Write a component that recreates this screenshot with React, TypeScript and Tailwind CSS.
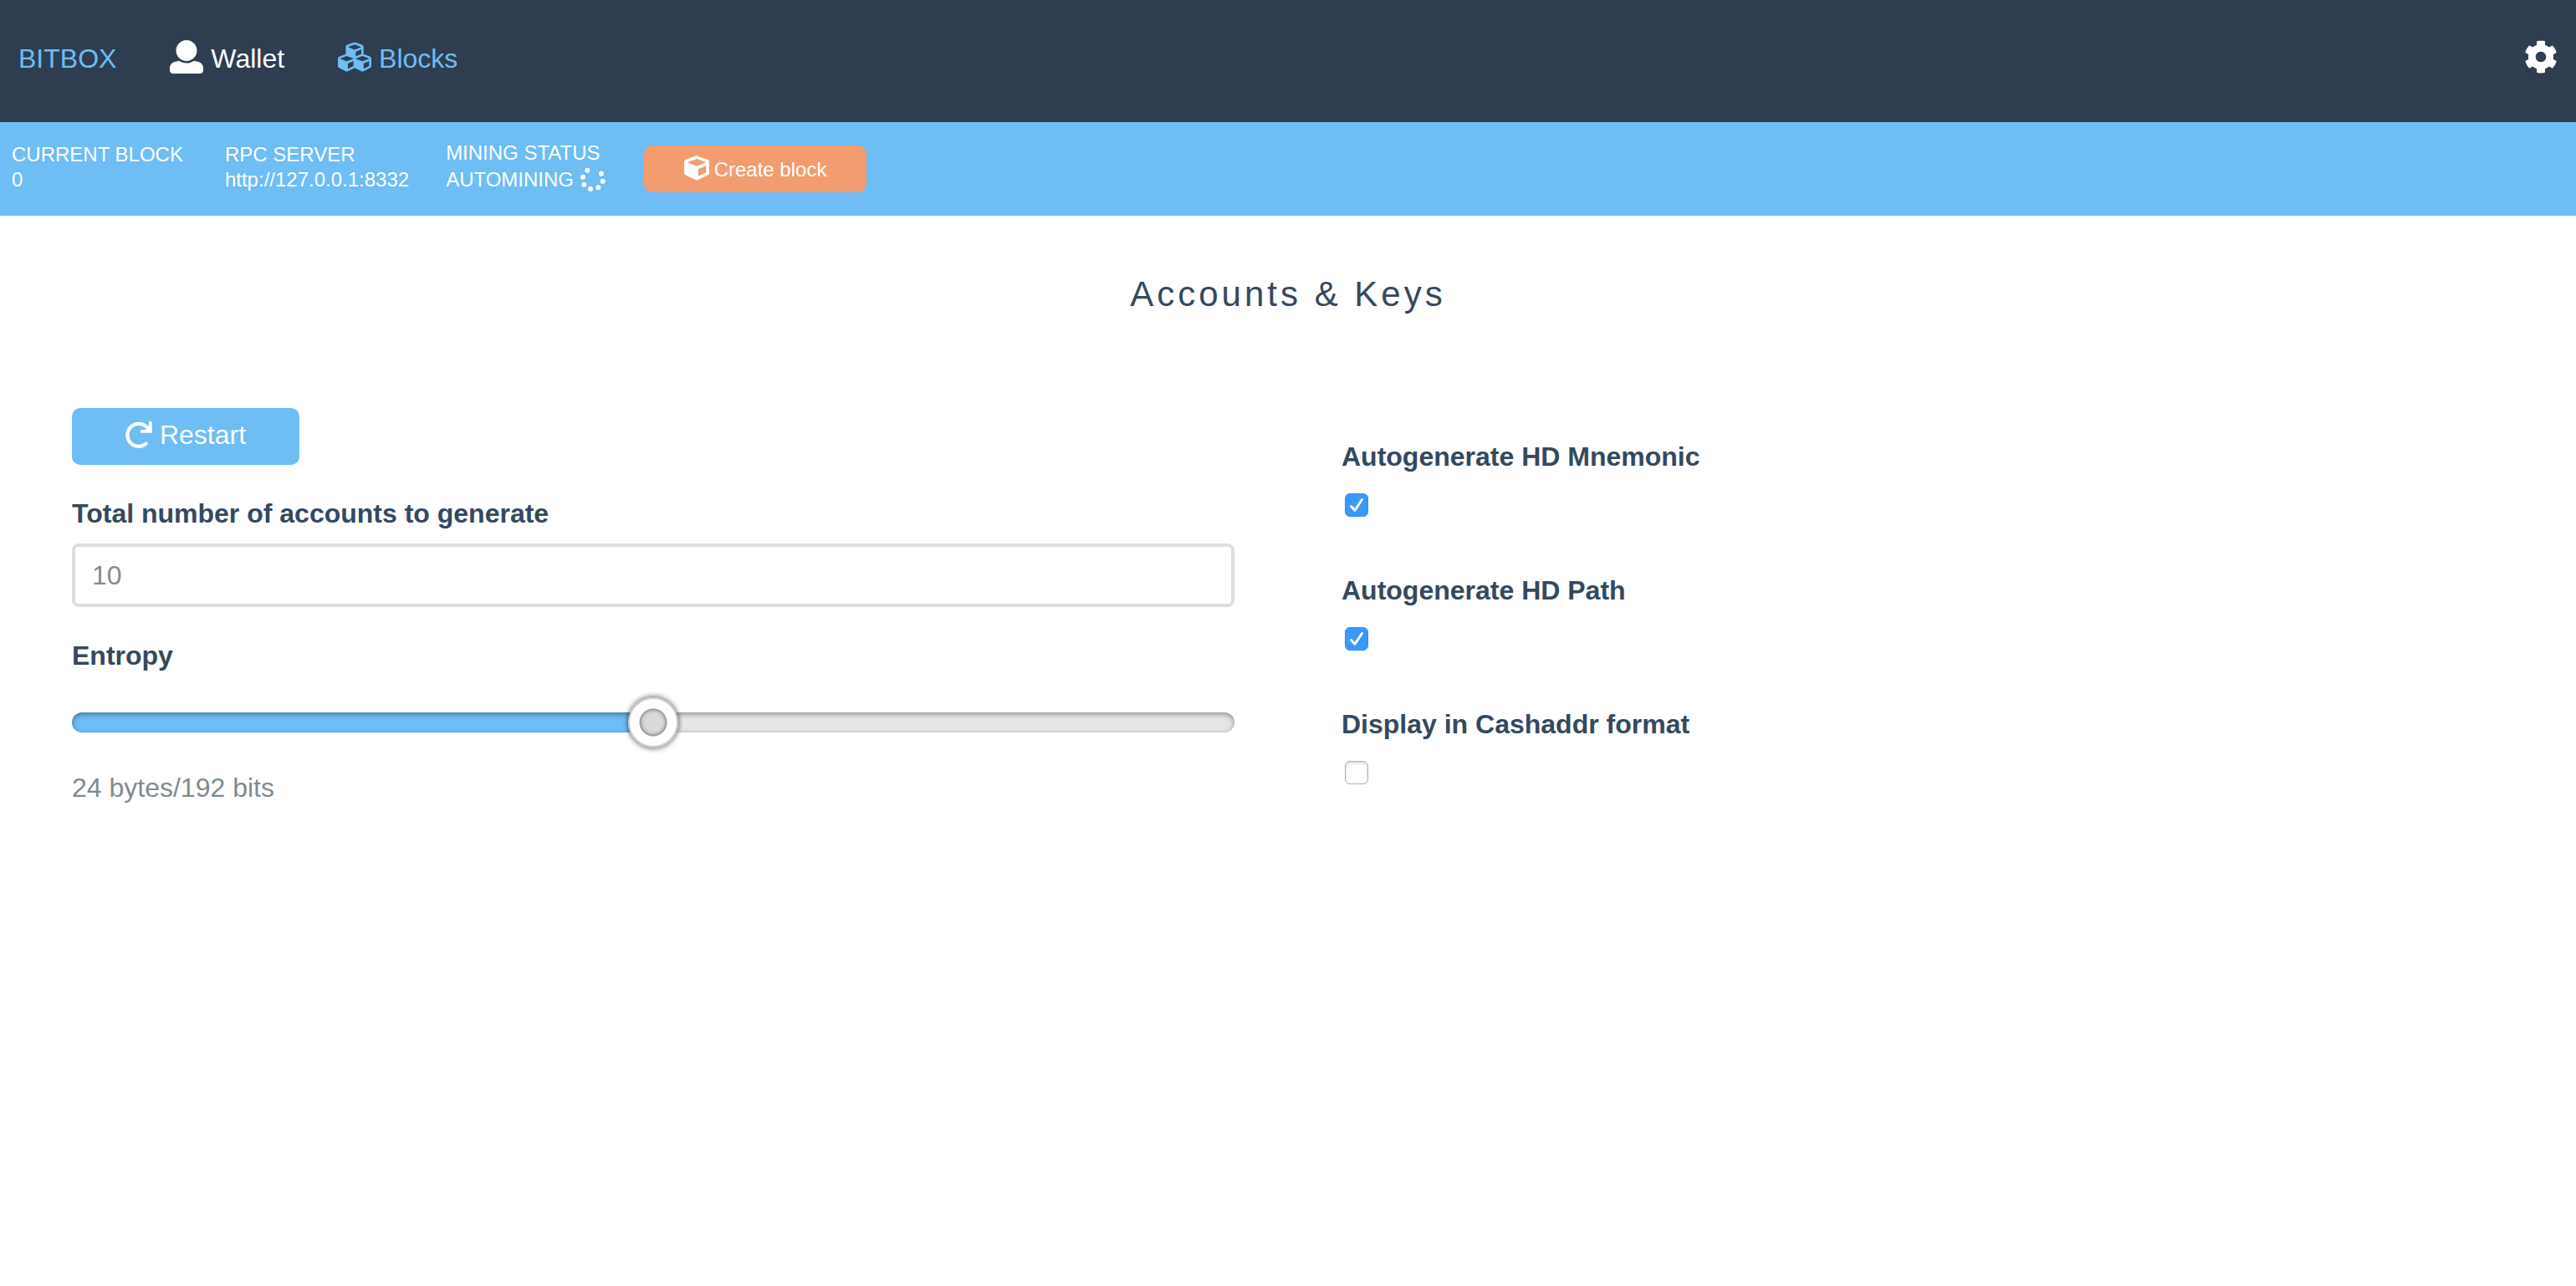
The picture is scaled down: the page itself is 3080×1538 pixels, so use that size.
import { useState } from "react";
import type { ReactNode } from "react";
import { FaCog, FaCube, FaCubes } from "react-icons/fa";

function UserIcon() {
  return (
    <svg viewBox="0 0 512 512" className="size-10" fill="currentColor" aria-hidden="true">
      <path d="M256 0c88.366 0 160 71.634 160 160s-71.634 160-160 160S96 248.366 96 160 167.634 0 256 0zm183.283 333.821l-71.313-17.828c-74.923 53.89-165.738 41.864-223.94 0l-71.313 17.828C29.981 344.505 0 382.903 0 426.955V464c0 26.51 21.49 48 48 48h416c26.51 0 48-21.49 48-48v-37.045c0-44.052-29.981-82.45-72.717-93.134z" />
    </svg>
  );
}

function RedoIcon() {
  return (
    <svg viewBox="0 0 96 97" className="size-8" fill="none" stroke="currentColor" aria-hidden="true">
      <path d="M74 81 A41 41 0 1 1 76 20 L88 33" strokeWidth="13" strokeLinecap="round" />
      <path d="M90 1 V36 H54" strokeWidth="12" />
    </svg>
  );
}

function SpinnerIcon() {
  return (
    <svg viewBox="0 0 90 90" className="size-[30px]" fill="currentColor" aria-hidden="true">
      <circle cx="25" cy="11" r="9" />
      <circle cx="75" cy="23" r="9" />
      <circle cx="80" cy="50" r="9" />
      <circle cx="64" cy="73" r="9" />
      <circle cx="36" cy="78" r="9" />
      <circle cx="13" cy="62" r="9" />
      <circle cx="9" cy="35" r="9" />
    </svg>
  );
}

function StatusItem({ title, children }: { title: string; children: ReactNode }) {
  return (
    <div className="pb-1 text-2xl leading-[30px] text-white">
      <div>{title}</div>
      <div className="flex items-center gap-2">{children}</div>
    </div>
  );
}

function CheckField({ id, label, initial }: { id: string; label: string; initial: boolean }) {
  const [on, setOn] = useState(initial);
  return (
    <div className="flex h-40 flex-col items-start">
      <label htmlFor={id} className="text-[32px] leading-10 font-bold text-[#34495e]">
        {label}
      </label>
      <div className="relative mt-6 ml-1 size-7">
        <input
          id={id}
          type="checkbox"
          checked={on}
          onChange={(e) => setOn(e.target.checked)}
          className="peer block size-7 appearance-none rounded-md border border-[#b0b0b0] bg-white shadow-[inset_0_2px_3px_rgba(0,0,0,0.15)] checked:border-[#2f8bf5] checked:bg-[#3b99fc] checked:shadow-none"
        />
        <svg
          viewBox="0 0 28 28"
          className="pointer-events-none absolute inset-0 hidden size-7 peer-checked:block"
          fill="none"
          strokeLinecap="round"
          strokeLinejoin="round"
          aria-hidden="true"
        >
          <path d="M7.5 16.5 L12 21.5 L20.5 8.5" stroke="#2b7fe0" strokeWidth="3" />
          <path d="M7.5 15.5 L12 20.5 L20.5 7.5" stroke="white" strokeWidth="3" />
        </svg>
      </div>
    </div>
  );
}

export default function App() {
  const [accounts, setAccounts] = useState("10");
  const [entropy, setEntropy] = useState(24);
  const fill = ((entropy - 16) / 16) * 100;

  return (
    <div className="min-h-screen bg-white font-['Liberation_Sans',Arial,sans-serif]">
      <header className="flex h-[146px] items-start justify-between bg-[#2e3e50] px-[22px] pt-12">
        <nav className="flex items-start text-[32px] leading-11 text-[#6ebdf5]">
          <a href="#home">BITBOX</a>
          <a href="#wallet" className="ml-16 flex items-start gap-[9px] text-white">
            <UserIcon />
            Wallet
          </a>
          <a href="#blocks" className="ml-16 flex items-start gap-[9px]">
            <FaCubes className="size-10" />
            Blocks
          </a>
        </nav>
        <button type="button" aria-label="Settings" className="text-white">
          <FaCog className="size-10" />
        </button>
      </header>

      <section className="flex h-28 items-center bg-[#6ebdf5] px-[14px]">
        <StatusItem title="CURRENT BLOCK">0</StatusItem>
        <div className="ml-[50px]">
          <StatusItem title="RPC SERVER">http://127.0.0.1:8332</StatusItem>
        </div>
        <div className="ml-11">
          <StatusItem title="MINING STATUS">
            <span className="leading-[34px]">AUTOMINING</span>
            <SpinnerIcon />
          </StatusItem>
        </div>
        <button
          type="button"
          className="ml-[46px] flex h-14 w-[266px] items-start justify-center gap-[6px] rounded-[10px] bg-[#f39c6f] pt-3 text-2xl leading-[34px] text-white"
        >
          <FaCube className="size-[30px]" />
          Create block
        </button>
      </section>

      <main className="px-[22px]">
        <h1 className="pt-16 text-center text-[42px] leading-[60px] tracking-[4px] text-[#34495e]">
          Accounts &amp; Keys
        </h1>
        <div className="mt-[106px] grid grid-cols-2">
          <div className="flex flex-col items-start px-16">
            <button
              type="button"
              className="flex h-[68px] w-[272px] items-center justify-center gap-[9px] rounded-[10px] bg-[#6ebdf5] pb-1 text-[32px] text-white"
            >
              <RedoIcon />
              Restart
            </button>
            <label htmlFor="accounts" className="mt-[38px] text-[32px] leading-10 font-bold text-[#34495e]">
              Total number of accounts to generate
            </label>
            <input
              id="accounts"
              type="text"
              value={accounts}
              onChange={(e) => setAccounts(e.target.value)}
              className="mt-4 h-[76px] w-full rounded-lg border-4 border-[#dddddd] px-5 text-[32px] text-[#7f8c8d]"
            />
            <label htmlFor="entropy" className="mt-[38px] text-[32px] leading-10 font-bold text-[#34495e]">
              Entropy
            </label>
            <input
              id="entropy"
              type="range"
              min={16}
              max={32}
              step={4}
              value={entropy}
              onChange={(e) => setEntropy(Number(e.target.value))}
              style={{ backgroundImage: `linear-gradient(to right, #6ebdf5 ${fill}%, #e6e6e6 ${fill}%)` }}
              className="mt-12 h-6 w-full appearance-none rounded-full shadow-[inset_0_2px_6px_rgba(0,0,0,0.4)] [&::-webkit-slider-thumb]:size-[60px] [&::-webkit-slider-thumb]:appearance-none [&::-webkit-slider-thumb]:rounded-full [&::-webkit-slider-thumb]:border-2 [&::-webkit-slider-thumb]:border-[#cccccc] [&::-webkit-slider-thumb]:bg-[radial-gradient(circle,#dadada_10px,#c8c8c8_13px,#999999_16px,#ffffff_17px)] [&::-webkit-slider-thumb]:shadow-[0_2px_6px_rgba(0,0,0,0.4),0_-2px_6px_rgba(0,0,0,0.4)]"
            />
            <output htmlFor="entropy" className="mt-[46px] text-[32px] leading-10 text-[#7f8c8d]">
              {entropy} bytes/{entropy * 8} bits
            </output>
          </div>
          <div className="px-16 pt-[38px]">
            <CheckField id="mnemonic" label="Autogenerate HD Mnemonic" initial={true} />
            <CheckField id="path" label="Autogenerate HD Path" initial={true} />
            <CheckField id="cashaddr" label="Display in Cashaddr format" initial={false} />
          </div>
        </div>
      </main>
    </div>
  );
}
